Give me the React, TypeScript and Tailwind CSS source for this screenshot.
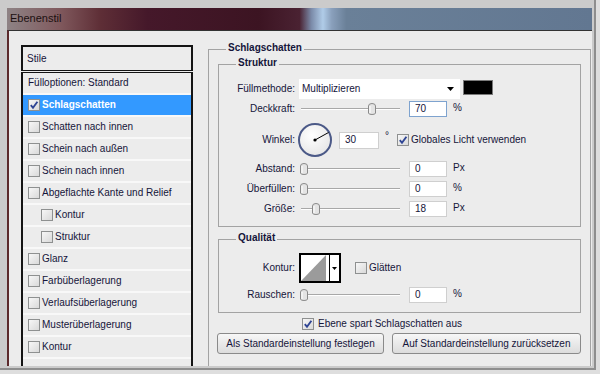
import React from "react";

function Cb({ checked }: { checked?: boolean }) {
  return (
    <span className="relative inline-flex h-[12px] w-[12px] shrink-0 border border-[#8e9090] bg-linear-to-br from-[#f7f7f7] to-[#d9d9d9]">
      {checked && (
        <svg viewBox="0 0 10 10" width="10" height="10" className="absolute left-0 top-0">
          <path d="M1.8 5.2 L4 7.8 L8.4 1.8" stroke="#2f4594" strokeWidth="1.9" fill="none" />
        </svg>
      )}
    </span>
  );
}

function Slider({ pos }: { pos: number }) {
  return (
    <div className="relative ml-[6px] h-[12px] w-[99px] shrink-0">
      <div className="absolute left-0 right-0 top-[5px] h-px bg-[#a8a8a8]" />
      <div className="absolute left-0 right-0 top-[6px] h-px bg-white" />
      <svg
        className="absolute top-0"
        style={{ left: pos - 4 }}
        width="8"
        height="12"
        viewBox="0 0 8 12"
      >
        <path d="M0.5 3 Q0.5 0.5 4 0.5 Q7.5 0.5 7.5 3 V10 Q7.5 11.5 4 11.5 Q0.5 11.5 0.5 10 Z" fill="#e4e4e4" stroke="#8a8a8a" />
        <path d="M2 3 V10" stroke="#ffffff" />
      </svg>
    </div>
  );
}

function Num({ v, blue }: { v: string; blue?: boolean }) {
  return (
    <div
      className={
        blue
          ? "ml-[9px] flex h-[16px] w-[38px] shrink-0 items-center border border-[#7ea3cf] bg-white pl-[5px]"
          : "ml-[9px] flex h-[16px] w-[38px] shrink-0 items-center border border-[#cfcfcf] bg-white pl-[5px]"
      }
    >
      {v}
    </div>
  );
}

function Label({ children }: { children: React.ReactNode }) {
  return <div className="w-[76px] shrink-0 text-right">{children}</div>;
}

function SliderRow({ label, pos, v, unit, blue }: { label: string; pos: number; v: string; unit: string; blue?: boolean }) {
  return (
    <div className="flex h-[20px] items-center">
      <Label>{label}</Label>
      <Slider pos={pos} />
      <Num v={v} blue={blue} />
      <span className="ml-[6px] -mt-[3px]">{unit}</span>
    </div>
  );
}

const items: { t: string; c?: boolean; sel?: boolean; ind?: boolean }[] = [
  { t: "Schlagschatten", c: true, sel: true },
  { t: "Schatten nach innen" },
  { t: "Schein nach außen" },
  { t: "Schein nach innen" },
  { t: "Abgeflachte Kante und Relief" },
  { t: "Kontur", ind: true },
  { t: "Struktur", ind: true },
  { t: "Glanz" },
  { t: "Farbüberlagerung" },
  { t: "Verlaufsüberlagerung" },
  { t: "Musterüberlagerung" },
  { t: "Kontur" },
];

export default function App() {
  return (
    <div className="h-[374px] w-[600px] overflow-hidden bg-[#dedede] font-['Liberation_Sans',Arial,sans-serif] text-[10px] leading-none text-[#15153a]">
      <div className="flex h-[370px] w-[596px] flex-col border-b-2 border-r-2 border-[#8e8e8e] bg-[#cbcbcb] pb-[2px] pl-[7px] pr-[2px] pt-[8px]">
        {/* Title bar */}
        <div className="flex h-[22px] shrink-0 items-center bg-[linear-gradient(to_right,#8e8385_0%,#80595d_9%,#5e2e36_16%,#45182a_24%,#3c1422_43%,#4a2232_50%,#7a8aa8_52%,#b0cce8_54%,#8aa0bc_55.5%,#6a8098_58%,#627791_100%)] pb-[2px] pl-[3px] text-[11px] text-[#1c1010]">
          Ebenenstil
        </div>
        {/* Content */}
        <div className="flex h-[336px] shrink-0 overflow-hidden border-l-2 border-t border-l-[#5c2a2c] border-t-[#333333] bg-[#ececec] pl-[12px] pr-[1px] pt-[14px]">
          {/* Left list */}
          <div className="flex w-[172px] shrink-0 flex-col">
            <div className="flex h-[26px] items-center border-x-2 border-b border-t-2 border-[#141414] pl-[4px]">
              Stile
            </div>
            <div className="mt-px flex-1 border-x-2 border-t border-[#141414]">
              <div className="flex h-[22px] items-center border-b-2 border-[#f8f8f8] pl-[5px]">
                Fülloptionen: Standard
              </div>
              {items.map((it, i) => (
                <div
                  key={i}
                  className={
                    it.sel
                      ? "flex h-[22px] items-center border-b-2 border-[#f8f8f8] bg-[#3399ff] pl-[5px] font-bold text-white"
                      : it.ind
                      ? "flex h-[22px] items-center border-b-2 border-[#f8f8f8] pl-[18px]"
                      : "flex h-[22px] items-center border-b-2 border-[#f8f8f8] pl-[5px]"
                  }
                >
                  <Cb checked={it.c} />
                  <span className="ml-[2px]">{it.t}</span>
                </div>
              ))}
            </div>
          </div>

          {/* Right panel */}
          <div className="relative ml-[15px] mt-[4px] w-[383px] shrink-0 border-x border-t border-[#a3a3a3] px-[9px] pt-[14px]">
            <span className="absolute -top-[7px] left-[17px] bg-[#ececec] px-[2px] font-bold">Schlagschatten</span>

            {/* Struktur */}
            <div className="relative h-[163px] border border-[#a3a3a3] pt-[14px]">
              <span className="absolute -top-[7px] left-[17px] bg-[#ececec] px-[2px] font-bold">Struktur</span>

              <div className="flex h-[20px] items-center">
                <Label>Füllmethode:</Label>
                <div className="ml-[4px] flex h-[20px] w-[161px] shrink-0 items-center justify-between bg-white pl-[3px] pr-[6px]">
                  <span>Multiplizieren</span>
                  <svg width="7" height="4" viewBox="0 0 7 4">
                    <path d="M0 0 H7 L3.5 4 Z" fill="#000" />
                  </svg>
                </div>
                <div className="ml-[3px] -mt-[4px] h-[15px] w-[30px] shrink-0 border border-[#7a7a7a] bg-black" />
              </div>

              <SliderRow label="Deckkraft:" pos={71} v="70" unit="%" blue />

              <div className="mt-[4px] flex h-[34px] items-center">
                <Label>Winkel:</Label>
                <div className="ml-[3px] h-[34px] w-[34px] shrink-0 rounded-full border-2 border-[#4b5987] bg-[radial-gradient(circle_at_40%_35%,#ffffff,#e0e0e0)]">
                  <svg width="30" height="30" viewBox="0 0 30 30">
                    <line x1="15" y1="15" x2="28.5" y2="7.5" stroke="#000" strokeWidth="1" />
                    <circle cx="15" cy="15" r="1.6" fill="#000" />
                  </svg>
                </div>
                <div className="ml-[7px] flex h-[17px] w-[40px] shrink-0 items-center border border-[#cfcfcf] bg-white pl-[5px]">
                  30
                </div>
                <span className="ml-[6px] -mt-[8px]">°</span>
                <span className="ml-[8px] flex items-center">
                  <Cb checked />
                  <span className="ml-[2px]">Globales Licht verwenden</span>
                </span>
              </div>

              <div className="mt-[2px]">
                <SliderRow label="Abstand:" pos={3} v="0" unit="Px" />
                <SliderRow label="Überfüllen:" pos={3} v="0" unit="%" />
                <SliderRow label="Größe:" pos={15} v="18" unit="Px" />
              </div>
            </div>

            {/* Qualität */}
            <div className="relative mt-[12px] h-[74px] border border-[#a3a3a3] pt-[13px]">
              <span className="absolute -top-[7px] left-[17px] bg-[#ececec] px-[2px] font-bold">Qualität</span>
              <div className="flex h-[30px] items-center">
                <Label>Kontur:</Label>
                <div className="ml-[4px] flex h-[30px] w-[42px] shrink-0 border-2 border-black bg-white">
                  <svg width="28" height="26" viewBox="0 0 28 26">
                    <polygon points="0,26 25,0 25,26" fill="#9b9b9b" />
                  </svg>
                  <div className="flex flex-1 items-center justify-center border-l border-black">
                    <svg width="5" height="3" viewBox="0 0 5 3">
                      <path d="M0 0 H5 L2.5 3 Z" fill="#000" />
                    </svg>
                  </div>
                </div>
                <span className="ml-[14px] flex items-center">
                  <Cb />
                  <span className="ml-[2px]">Glätten</span>
                </span>
              </div>
              <div className="mt-[2px]">
                <SliderRow label="Rauschen:" pos={3} v="0" unit="%" />
              </div>
            </div>

            <div className="ml-[84px] mt-[5px] flex h-[12px] items-center">
              <Cb checked />
              <span className="ml-[4px]">Ebene spart Schlagschatten aus</span>
            </div>

            <div className="-ml-[1px] mt-[3px] flex">
              <button className="flex h-[21px] w-[168px] items-center justify-center rounded-[3px] border border-[#8a8a8a] bg-linear-to-b from-[#f7f7f7] to-[#dcdcdc]">
                Als Standardeinstellung festlegen
              </button>
              <button className="ml-[8px] flex h-[21px] w-[190px] items-center justify-center rounded-[3px] border border-[#8a8a8a] bg-linear-to-b from-[#f7f7f7] to-[#dcdcdc]">
                Auf Standardeinstellung zurücksetzen
              </button>
            </div>
          </div>
        </div>
      </div>
    </div>
  );
}
